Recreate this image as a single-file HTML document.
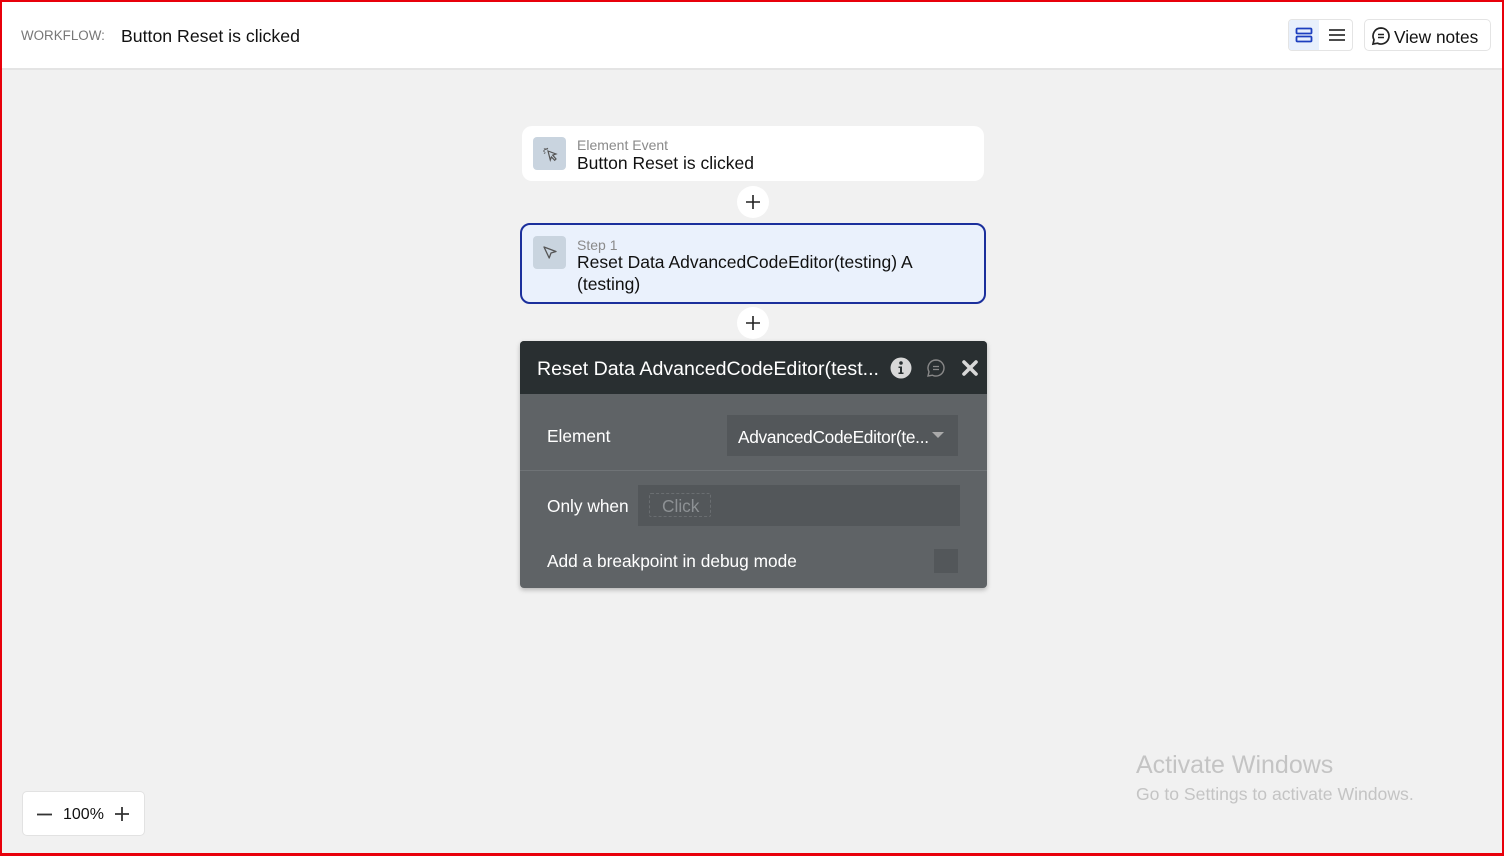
<!DOCTYPE html>
<html><head><meta charset="utf-8"><style>
*{box-sizing:border-box;margin:0;padding:0}
body{width:1504px;height:856px;overflow:hidden;background:#f1f1f1;font-family:"Liberation Sans",sans-serif;position:relative}
.a{position:absolute}
#frame{left:0;top:0;width:1504px;height:856px;border:2px solid #e8000b;border-bottom-width:3px;z-index:10;pointer-events:none}
#hdr{left:0;top:0;width:1504px;height:70px;background:#fff;border-bottom:2px solid #e4e4e4}
.card{background:#fff;border-radius:10px}
.ico{width:33px;height:33px;background:#c9d4df;border-radius:4px;display:flex;align-items:center;justify-content:center}
.plus{width:32px;height:32px;border-radius:50%;background:#fff;display:flex;align-items:center;justify-content:center}
.lbl{color:#8a8a8a;font-size:14px}
.ttl{color:#111;font-size:17.5px}
</style></head><body>
<div class="a" id="hdr">
 <div class="a" style="left:21px;top:28px;font-size:13.4px;color:#777">WORKFLOW:</div>
 <div class="a" style="left:121px;top:26px;font-size:17.7px;color:#111">Button Reset is clicked</div>
 <div class="a" style="left:1288px;top:19px;width:65px;height:32px;border:1px solid #e4e4e4;border-radius:4px;background:#fff">
  <div class="a" style="left:0;top:0;width:30px;height:30px;background:#e8f0fc;border-radius:3px 0 0 3px"></div>
  <svg class="a" style="left:6px;top:7px" width="18" height="16" viewBox="0 0 18 16"><rect x="1.5" y="1.5" width="15" height="5" rx="1" fill="none" stroke="#1d3fbf" stroke-width="1.8"/><rect x="1.5" y="9.5" width="15" height="5" rx="1" fill="none" stroke="#1d3fbf" stroke-width="1.8"/></svg>
  <svg class="a" style="left:39px;top:8px" width="18" height="14" viewBox="0 0 18 14"><path d="M1 2h16M1 7h16M1 12h16" stroke="#333" stroke-width="1.8"/></svg>
 </div>
 <div class="a" style="left:1364px;top:19px;width:127px;height:32px;border:1px solid #e4e4e4;border-radius:5px;background:#fff">
  <svg class="a" style="left:6px;top:6px" width="20" height="20" viewBox="0 0 20 20"><path d="M10 2a8 8 0 1 1-3.5 15.2L2 18l1-4.2A8 8 0 0 1 10 2z" fill="none" stroke="#222" stroke-width="1.7"/><path d="M7 8.5h6M7 11.5h6" stroke="#222" stroke-width="1.5"/></svg>
  <div class="a" style="left:29px;top:7px;font-size:17.3px;color:#111">View notes</div>
 </div>
</div>

<div class="a card" style="left:522px;top:126px;width:462px;height:55px">
 <div class="a ico" style="left:11px;top:11px"><svg width="18" height="18" viewBox="0 0 18 18"><path d="M7 6l8 3-3.3 1.2L15 14l-1.3 1.3-3.3-3.3L9.3 15z" fill="none" stroke="#555" stroke-width="1.2"/><path d="M5 3v2M2 6h2M3 3.5l1.3 1.3M6.8 3l-.8 1.4M3 8.5l1.4-.9" stroke="#555" stroke-width="1"/></svg></div>
 <div class="a lbl" style="left:55px;top:11px">Element Event</div>
 <div class="a ttl" style="left:55px;top:27px">Button Reset is clicked</div>
</div>
<div class="a plus" style="left:737px;top:186px"><svg width="16" height="16"><path d="M8 1v14M1 8h14" stroke="#222" stroke-width="1.6"/></svg></div>

<div class="a" style="left:520px;top:223px;width:466px;height:81px;background:#eaf1fc;border:2px solid #1b2f9c;border-radius:10px">
 <div class="a ico" style="left:11px;top:11px"><svg width="16" height="16" viewBox="0 0 16 16"><path d="M2 2l12 4.5-5 1.5-1.8 5z" fill="none" stroke="#555" stroke-width="1.3" stroke-linejoin="round"/></svg></div>
 <div class="a lbl" style="left:55px;top:12px">Step 1</div>
 <div class="a ttl" style="left:55px;top:26px;line-height:22px;width:380px">Reset Data AdvancedCodeEditor(testing) A (testing)</div>
</div>
<div class="a plus" style="left:737px;top:307px"><svg width="16" height="16"><path d="M8 1v14M1 8h14" stroke="#222" stroke-width="1.6"/></svg></div>

<div class="a" style="left:520px;top:341px;width:467px;height:247px;background:#5f6366;border-radius:4px;box-shadow:0 2px 5px rgba(0,0,0,.25);overflow:hidden">
 <div class="a" style="left:0;top:0;width:467px;height:53px;background:#292f31"></div>
 <div class="a" style="left:17px;top:17px;color:#fff;font-size:19.6px">Reset Data AdvancedCodeEditor(test...</div>
 <svg class="a" style="left:370px;top:16px" width="22" height="22" viewBox="0 0 22 22"><circle cx="11" cy="11" r="10.5" fill="#d8d8d8"/><circle cx="11" cy="6" r="1.8" fill="#292f31"/><path d="M8.5 9.5h3.5v6h1.5v1.5h-5v-1.5h1.5v-4.5h-1.5z" fill="#292f31"/></svg>
 <svg class="a" style="left:406px;top:17px" width="20" height="20" viewBox="0 0 20 20"><path d="M10 2a8 8 0 1 1-3.5 15.2L2 18l1-4.2A8 8 0 0 1 10 2z" fill="none" stroke="#888" stroke-width="1.4"/><path d="M7 8.5h6M7 11.5h6" stroke="#888" stroke-width="1.3"/></svg>
 <svg class="a" style="left:441px;top:18px" width="18" height="18" viewBox="0 0 18 18"><path d="M3 3l12 12M15 3L3 15" stroke="#d8d8d8" stroke-width="3.6" stroke-linecap="round"/></svg>
 <div class="a" style="left:27px;top:85px;color:#fff;font-size:17.3px">Element</div>
 <div class="a" style="left:207px;top:74px;width:231px;height:41px;background:#53575a"></div>
 <div class="a" style="left:218px;top:86px;color:#fff;font-size:17.3px;letter-spacing:-0.3px">AdvancedCodeEditor(te...</div>
 <svg class="a" style="left:412px;top:91px" width="12" height="7"><path d="M0 0h12L6 6z" fill="#aaa"/></svg>
 <div class="a" style="left:0;top:129px;width:467px;height:1px;background:#6f7376"></div>
 <div class="a" style="left:27px;top:155px;color:#fff;font-size:17.3px">Only when</div>
 <div class="a" style="left:118px;top:144px;width:322px;height:41px;background:#53575a"></div>
 <div class="a" style="left:129px;top:152px;width:62px;height:24px;border:1px dashed #6a6e71;border-radius:2px"></div>
 <div class="a" style="left:142px;top:155px;color:#8d9194;font-size:17.3px">Click</div>
 <div class="a" style="left:27px;top:210px;color:#fff;font-size:17.3px">Add a breakpoint in debug mode</div>
 <div class="a" style="left:414px;top:208px;width:24px;height:24px;background:#53575a"></div>
</div>

<div class="a" style="left:1136px;top:751px;color:#c4c4c4;font-size:25px">Activate Windows</div>
<div class="a" style="left:1136px;top:784px;color:#c4c4c4;font-size:17.6px">Go to Settings to activate Windows.</div>

<div class="a" style="left:22px;top:791px;width:123px;height:45px;background:#fff;border:1px solid #e2e2e2;border-radius:5px">
 <svg class="a" style="left:14px;top:21px" width="16" height="3"><path d="M0 1.5h15" stroke="#333" stroke-width="1.8"/></svg>
 <div class="a" style="left:40px;top:14px;font-size:16px;color:#111">100%</div>
 <svg class="a" style="left:91px;top:14px" width="16" height="16"><path d="M8 1v14M1 8h14" stroke="#333" stroke-width="1.8"/></svg>
</div>
<div class="a" id="frame"></div>
</body></html>
